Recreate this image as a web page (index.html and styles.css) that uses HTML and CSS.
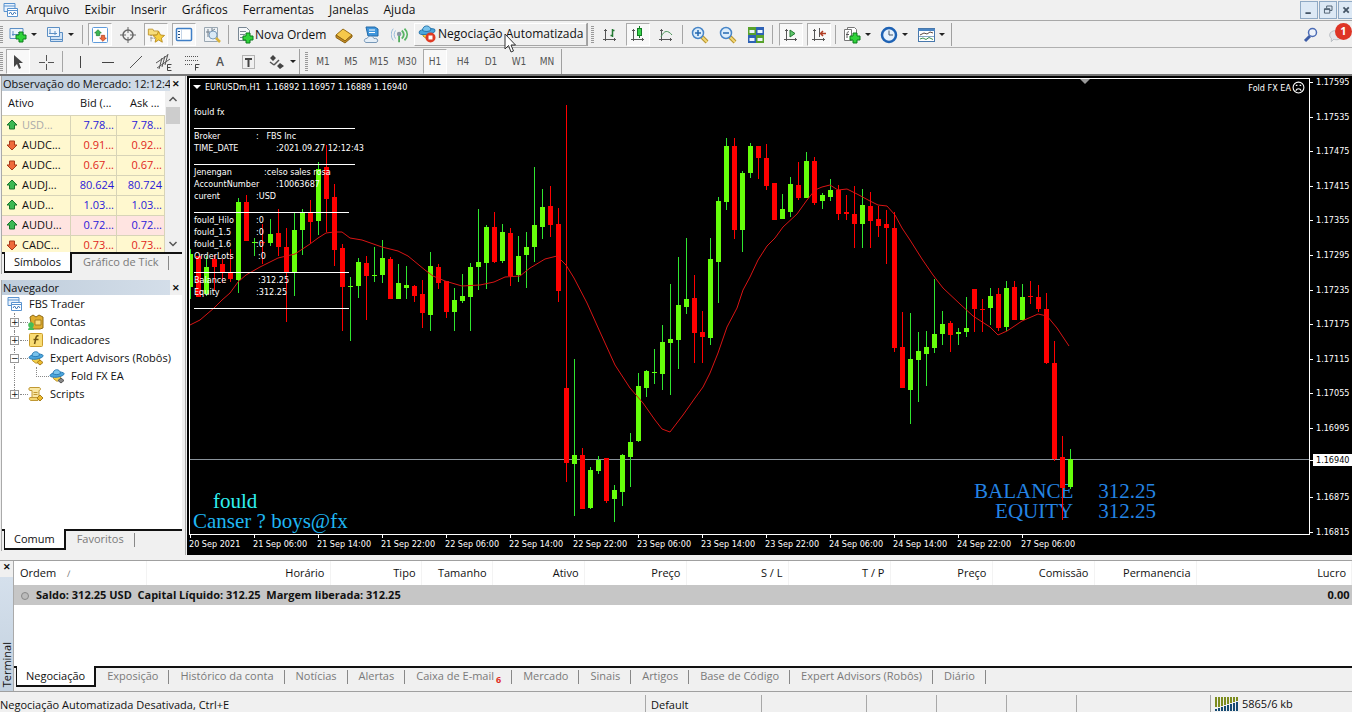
FILE: index.html
```html
<!DOCTYPE html>
<html lang="pt">
<head>
<meta charset="utf-8">
<title>FBS Trader</title>
<link rel="stylesheet" href="styles.css">
</head>
<body>
<svg class="defs" aria-hidden="true">
  <symbol id="plus" viewBox="0 0 12 12"><path d="M4 1h4v3h3v4H8v3H4V8H1V4h3z" fill="#2fd43a" stroke="#0c7d1c"/></symbol>
  <symbol id="app" viewBox="0 0 16 16"><path d="M1 1.500h11v8H1zM1 4h11" fill="#eaf3fd" stroke="#5a93cf"/><path d="M4.500 6.500h10v8h-10zM4.500 8.500h10" fill="#fff" stroke="#5a93cf"/><path d="M6 12l1.500-2 2 3 2-3 1.500 2" fill="none" stroke="#3f78b8"/></symbol>
  <symbol id="robot" viewBox="0 0 18 16"><path d="M5 8l8 0 0 4-4 2-4-3z" fill="#f3d04b" stroke="#b98d1c"/><ellipse cx="9" cy="6.500" rx="8" ry="2.800" fill="#4aa5dd" stroke="#2878b0" transform="rotate(-8 9 6)"/><path d="M4.500 5.500c0-6 8-6 8.500-.5-2 1.800-6 2-8.500.5z" fill="#79c3ec" stroke="#2878b0"/></symbol>
  <symbol id="axes" viewBox="0 0 16 16"><path d="M3.500 2v12M1 12.500h13M2 3.500h3M12.500 11v3" fill="none" stroke="#555"/></symbol>
  <symbol id="lens" viewBox="0 0 18 18"><path d="M11 11l5 5" stroke="#b8932a" stroke-width="4"/><path d="M11 11l5 5" stroke="#f1d777" stroke-width="2"/><circle cx="7" cy="7" r="5.500" fill="#dcedfb" stroke="#4785c7" stroke-width="1.500"/></symbol>
  <symbol id="up" viewBox="0 0 12 12"><path d="M6 1l5 5H8.500v4h-5V6H1z" fill="#3cb854" stroke="#19772c"/></symbol>
  <symbol id="down" viewBox="0 0 12 12"><path d="M6 11l5-5H8.500V2h-5v4H1z" fill="#ee6a3c" stroke="#a83a1b"/></symbol>
  <symbol id="dots" viewBox="0 0 18 18"><path d="M2 3.500h14M2 7.500h14M2 11.500h8" stroke="#555" stroke-dasharray="1 1"/></symbol>
</svg>

<header>
  <nav class="menu">
    <svg class="i16"><use href="#app"/></svg>
    <button>Arquivo</button><button>Exibir</button><button>Inserir</button><button>Gráficos</button><button>Ferramentas</button><button>Janelas</button><button>Ajuda</button>
    <div class="winbtns">
      <button aria-label="Minimizar"><svg viewBox="0 0 18 18"><path d="M5 12.500h6" stroke="#456" stroke-width="2"/></svg></button>
      <button aria-label="Restaurar"><svg viewBox="0 0 18 18"><path d="M7.500 7V4.500h6v5H11M5 7.500h6v5H5zM5 8.500h6" fill="none" stroke="#456"/></svg></button>
      <button aria-label="Fechar"><svg viewBox="0 0 18 18"><path d="M5 6l6 6M11 6l-6 6" stroke="#456" stroke-width="2"/></svg></button>
    </div>
  </nav>

  <div class="bar">
    <span class="grip"></span>
    <button class="drop" aria-label="Novo gráfico"><svg viewBox="0 0 18 18"><path d="M1 2.500h13v10H1z" fill="#e9f2fb" stroke="#5c8fc4"/><path d="M4 5v5M3 8.500h8M9 6l2 2" stroke="#5c8fc4" fill="none"/><use href="#plus" x="6" y="5" width="12" height="12"/></svg></button>
    <button class="drop" aria-label="Perfis"><svg viewBox="0 0 18 18"><path d="M4.500 6.500h12v9h-12z" fill="#cfe2f5" stroke="#5c8fc4"/><path d="M1.500 1.500h12v9h-12z" fill="#eef5fc" stroke="#5c8fc4"/><path d="M4 3v5M3 7.500h8M9 5v4M4 13.500h12" stroke="#5c8fc4"/></svg></button>
    <span class="sep"></span>
    <button class="tool on" aria-label="Observação do Mercado"><svg viewBox="0 0 18 18"><rect x="1.500" y="1.500" width="15" height="15" rx="1" fill="#fff" stroke="#5e9bdc"/><use href="#up" x="3" y="3" width="8" height="8"/><use href="#down" x="8" y="8" width="8" height="8"/></svg></button>
    <button class="tool" aria-label="Janela de Dados"><svg viewBox="0 0 18 18"><circle cx="9" cy="9" r="5" fill="none" stroke="#666" stroke-width="1.500"/><path d="M9 1v6M9 11v6M1 9h6M11 9h6" stroke="#666"/></svg></button>
    <button class="tool on" aria-label="Navegador"><svg viewBox="0 0 20 18"><path d="M1.500 9V2.500h5l1 2h5V9z" fill="#f7dd7b" stroke="#bf952c"/><path d="M4.500 9v8M4 12.500h6" stroke="#555" stroke-dasharray="1 1"/><path d="M13 5l2 4 4.500.5-3.500 3 1 4.500-4-2.500L9 17l1-4.500-3.500-3L11 9z" fill="#f6cf3e" stroke="#b98b1b"/></svg></button>
    <button class="tool on" aria-label="Terminal"><svg viewBox="0 0 18 18"><rect x="1.500" y="2.500" width="15" height="12" rx="1" fill="#fff" stroke="#3f7fc7" stroke-width="1.500"/><path d="M6.500 3v11" stroke="#c5d5e8"/><path d="M3 5.500h2M3 8.500h2M3 11.500h2" stroke="#244a78"/></svg></button>
    <button class="tool" aria-label="Testador de Estratégia"><svg viewBox="0 0 18 18"><path d="M1.500 1.500h13v14h-13z" fill="#eef2f5" stroke="#9aa7b2"/><path d="M5 3v8M9 2v7M3 6h4M9 5l3-2" stroke="#6e7d8a"/><circle cx="10" cy="9" r="4" fill="#dbeaf6" stroke="#7b9cbb"/><path d="M13 12l4 4" stroke="#d9b23a" stroke-width="2.500"/></svg></button>
    <span class="sep"></span>
    <button class="text new"><svg viewBox="0 0 18 18"><path d="M2.500 1.500h8l3 3v10h-11z" fill="#f6f8fa" stroke="#7a8894"/><path d="M4 5.500h6M4 8.500h5M4 11.500h3" stroke="#7a8894"/><use href="#plus" x="6" y="6" width="12" height="12"/></svg>Nova Ordem</button>
    <button class="tool" aria-label="MetaEditor"><svg viewBox="0 0 18 18"><path d="M1 9l7-6 9 6-7 6z" fill="#f5c84a" stroke="#9a6f16"/><path d="M1 9v2.500l9 5.500 7-6V9l-7 6z" fill="#c98f26" stroke="#8c6312"/></svg></button>
    <button class="tool" aria-label="MQL5"><svg viewBox="0 0 18 18"><path d="M3 1h9l3 2v7H5z" fill="#3f96dc" stroke="#2369a6"/><path d="M6 4h6M6 6.500h6" stroke="#fff"/><path d="M3 16.500c-3-1-1.500-4.500 1-4 1-3 6-3 7 0 4-1 5 3.500 2 4z" fill="#e4eef7" stroke="#7898b8"/></svg></button>
    <button class="tool" aria-label="Sinais"><svg viewBox="0 0 20 18"><path d="M5 4c-2 3-2 6 0 9M2.500 2c-3 4-3 9 0 13" fill="none" stroke="#8ab2d6"/><path d="M12 4c3 3 3 6 0 9M15 2c4 4 4 9 0 13" fill="none" stroke="#58b564" stroke-width="2"/><circle cx="9" cy="8" r="2.500" fill="#8898a5"/><path d="M9 10v7" stroke="#52ac5e" stroke-width="2"/></svg></button>
    <button class="text auto"><svg viewBox="0 0 18 18"><use href="#robot" x="0" y="0" width="18" height="16"/><circle cx="12.500" cy="12.500" r="5" fill="#df3a24"/><rect x="10.500" y="10.500" width="4" height="4" fill="#fff"/></svg>Negociação Automatizada</button>
    <span class="end"></span>
    <span class="grip"></span>
    <button class="tool" aria-label="Barras"><svg viewBox="0 0 18 18"><use href="#axes" x="1" y="1" width="16" height="16"/><path d="M11.500 3v8M9.500 9.500h2M11.500 4.500h2" stroke="#237832" stroke-width="1.500"/></svg></button>
    <button class="tool on" aria-label="Velas"><svg viewBox="0 0 18 18"><use href="#axes" x="1" y="1" width="16" height="16"/><path d="M10.500 0v12" stroke="#137a25"/><rect x="8.500" y="2.500" width="4" height="7" fill="#39d14a" stroke="#137a25"/></svg></button>
    <button class="tool" aria-label="Linhas"><svg viewBox="0 0 18 18"><use href="#axes" x="1" y="1" width="16" height="16"/><path d="M4 11c3-7 7-7 11-2" fill="none" stroke="#4a9658"/></svg></button>
    <span class="sep"></span>
    <button class="tool" aria-label="Mais zoom"><svg viewBox="0 0 18 18"><use href="#lens"/><path d="M4 7h6M7 4v6" stroke="#2568b0" stroke-width="1.500"/></svg></button>
    <button class="tool" aria-label="Menos zoom"><svg viewBox="0 0 18 18"><use href="#lens"/><path d="M4 7h6" stroke="#2568b0" stroke-width="1.500"/></svg></button>
    <button class="tool" aria-label="Organizar janelas"><svg viewBox="0 0 18 18"><path d="M1 1h8v8H1z" fill="#58a22c"/><path d="M9 1h8v8H9z" fill="#2e62b5"/><path d="M1 9h8v8H1z" fill="#2e62b5"/><path d="M9 9h8v8H9z" fill="#58a22c"/><path d="M2.500 4h5v3h-5zM10.500 4h5v3h-5zM2.500 12h5v3h-5zM10.500 12h5v3h-5z" fill="#edf5fc"/></svg></button>
    <span class="sep wide"></span>
    <button class="tool on" aria-label="Rolagem automática"><svg viewBox="0 0 18 18"><use href="#axes" x="1" y="1" width="16" height="16"/><path d="M8 4l5 3.500L8 11z" fill="#5fc96c" stroke="#237832"/></svg></button>
    <button class="tool on" aria-label="Deslocar gráfico"><svg viewBox="0 0 18 18"><use href="#axes" x="1" y="1" width="16" height="16"/><path d="M9.500 2v9" stroke="#555"/><path d="M16 7.500h-5M13 5l-2.500 2.500L13 10" fill="none" stroke="#b03b22" stroke-width="1.500"/></svg></button>
    <span class="sep wide"></span>
    <button class="drop" aria-label="Indicadores"><svg viewBox="0 0 18 18"><path d="M4.500 1.500h7l2 2v9h-9z" fill="#fff" stroke="#777"/><path d="M1.500 3.500h7v11h-7z" fill="#fff" stroke="#777"/><path d="M6 6c-2-1-2 1-2 6M3 8.500h3" fill="none" stroke="#555"/><use href="#plus" x="6" y="6" width="12" height="12"/></svg></button>
    <button class="drop" aria-label="Períodos"><svg viewBox="0 0 18 18"><circle cx="9" cy="9" r="7" fill="#e6f1fc" stroke="#1e62b4" stroke-width="2.500"/><path d="M9 4.500V9h4" fill="none" stroke="#456"/></svg></button>
    <button class="drop" aria-label="Modelos"><svg viewBox="0 0 18 18"><rect x="1.500" y="2.500" width="16" height="13" fill="#fff" stroke="#4878ac"/><path d="M1 4h17" stroke="#4c86c4" stroke-width="2"/><path d="M3 9l4-2 3 1 3-2 3 1" fill="none" stroke="#5b4b44"/><path d="M3 13l3-1 3 1.500 3-2 4 2" fill="none" stroke="#3d8f4e"/><path d="M2 10.500h15" stroke="#8aa9c8"/></svg></button>
    <span class="end"></span>
    <div class="right">
      <button aria-label="Buscar"><svg viewBox="0 0 18 18"><path d="M8 10l-5 5" stroke="#3d5ca6" stroke-width="3"/><circle cx="10.500" cy="6.500" r="4" fill="#eef3fb" stroke="#4c6cb5" stroke-width="1.500"/></svg></button>
      <button class="chat" aria-label="Mensagens"><svg viewBox="0 0 24 20"><path d="M2 10c0-7 14-7 14 0s-7 6-9 5l-3 3 0-4c-1-1-2-2-2-4z" fill="#e3e6ea" stroke="#b2b7bd"/></svg><b>1</b></button>
    </div>
  </div>

  <div class="bar second">
    <span class="grip"></span>
    <button class="tool on" aria-label="Cursor"><svg viewBox="0 0 18 18"><path d="M5 2v12l3-3 2 5 2-1-2-5h4z" fill="#444"/></svg></button>
    <button class="tool" aria-label="Mira"><svg viewBox="0 0 18 18"><path d="M9.500 2v6M9.500 11v6M2 9.500h6M11 9.500h6" stroke="#555"/></svg></button>
    <span class="sep"></span>
    <button class="tool" aria-label="Linha vertical"><svg viewBox="0 0 18 18"><path d="M9.500 3v12" stroke="#444"/></svg></button>
    <button class="tool" aria-label="Linha horizontal"><svg viewBox="0 0 18 18"><path d="M3 9.500h12" stroke="#444"/></svg></button>
    <button class="tool" aria-label="Linha de tendência"><svg viewBox="0 0 18 18"><path d="M3 15L15 3" stroke="#555"/></svg></button>
    <button class="tool" aria-label="Canal equidistante"><svg viewBox="0 0 18 18"><path d="M1 10l12-8M2 15L15 6M4 16L7 5M7 14l3-11M10 12l3-11" stroke="#555"/><path d="M16.500 11.500h-4v6h4M12.500 14.500h3" fill="none" stroke="#444"/></svg></button>
    <button class="tool" aria-label="Fibonacci"><svg viewBox="0 0 18 18"><use href="#dots"/><path d="M16.500 11.500h-4v6M12.500 14.500h3" fill="none" stroke="#444"/></svg></button>
    <button class="tool letter" aria-label="Texto">A</button>
    <button class="tool" aria-label="Etiqueta"><svg viewBox="0 0 18 18"><rect x="3.500" y="2.500" width="12" height="13" fill="none" stroke="#777" stroke-dasharray="1 1"/><path d="M6 6h7M9.500 6v8" stroke="#444" stroke-width="2"/></svg></button>
    <button class="drop arrows" aria-label="Setas"><svg viewBox="0 0 18 18"><path d="M2 5l3-3 3 3-3 3zM9 13l3-3 4 3-4 3z" fill="#444"/><path d="M6 12l5-5M2 9l4 3" stroke="#555" stroke-width="1.500"/></svg></button>
    <span class="end"></span>
    <span class="grip"></span>
    <button class="tool tf">M1</button><button class="tool tf">M5</button><button class="tool tf">M15</button><button class="tool tf">M30</button><button class="tool tf on">H1</button><button class="tool tf">H4</button><button class="tool tf">D1</button><button class="tool tf">W1</button><button class="tool tf">MN</button>
    <span class="end"></span>
  </div>
  <svg class="pointer" viewBox="0 0 12 20"><path d="M1 1v15l3.500-3.500L7 19l2.500-1L7 12h4.500z" fill="#fff" stroke="#333"/></svg>
</header>

<main>
  <aside>
    <section class="market">
      <h2><span>Observação do Mercado: 12:12:44</span><button aria-label="Fechar">✕</button></h2>
      <div class="quotes">
        <table>
          <colgroup><col><col class="bid"><col class="ask"></colgroup>
          <thead><tr><th>Ativo</th><th>Bid (...</th><th>Ask ...</th></tr></thead>
          <tbody>
            <tr class="b off"><td><svg><use href="#up"/></svg>USD...</td><td>7.78...</td><td>7.78...</td></tr>
            <tr class="r"><td><svg><use href="#down"/></svg>AUDC...</td><td>0.91...</td><td>0.92...</td></tr>
            <tr class="r"><td><svg><use href="#down"/></svg>AUDC...</td><td>0.67...</td><td>0.67...</td></tr>
            <tr class="b"><td><svg><use href="#up"/></svg>AUDJ...</td><td>80.624</td><td>80.724</td></tr>
            <tr class="b"><td><svg><use href="#up"/></svg>AUD...</td><td>1.03...</td><td>1.03...</td></tr>
            <tr class="b pink"><td><svg><use href="#up"/></svg>AUDU...</td><td>0.72...</td><td>0.72...</td></tr>
            <tr class="r"><td><svg><use href="#down"/></svg>CADC...</td><td>0.73...</td><td>0.73...</td></tr>
          </tbody>
        </table>
        <div class="scroll"><svg viewBox="0 0 16 16"><path d="M4.500 10L8 6.500l3.500 3.500" fill="none" stroke="#555" stroke-width="1.500"/></svg><i></i><svg viewBox="0 0 16 16"><path d="M4.500 6L8 9.500 11.500 6" fill="none" stroke="#555" stroke-width="1.500"/></svg></div>
      </div>
      <div class="tabs"><button class="sel">Símbolos</button><button>Gráfico de Tick</button></div>
    </section>
    <section class="nav">
      <h2><span>Navegador</span><button aria-label="Fechar">✕</button></h2>
      <ul>
        <li><svg class="i16"><use href="#app"/></svg>FBS Trader</li>
        <li class="l1"><i>+</i><svg class="i16" viewBox="0 0 16 16"><path d="M2 3l3-2 3 2 3-2 4 2v11l-3 1H4z" fill="#e0ad2e" stroke="#8f6a17"/><path d="M7 6h6v5H7z" fill="#f8dc7c" stroke="#a77e20"/><circle cx="3" cy="11" r="2.800" fill="#45bd58"/><path d="M0 16c0-4 6-4 6 0z" fill="#45bd58"/></svg>Contas</li>
        <li class="l1"><i>+</i><svg class="i16" viewBox="0 0 16 16"><rect x="1.500" y="1.500" width="13" height="13" rx="1" fill="#f9dc74" stroke="#cb9c2a"/><path d="M10.500 4c-3-1-2.500 3-4 8M5.500 7.500h5" fill="none" stroke="#6e5210" stroke-width="1.500"/></svg>Indicadores</li>
        <li class="l1"><i>−</i><svg class="i16" viewBox="0 0 16 16"><use href="#robot"/><path d="M12 10l3 2.500-3 2.500-3-2.500z" fill="#edba2e" stroke="#a87f1b"/></svg>Expert Advisors (Robôs)</li>
        <li class="l2"><svg class="i16" viewBox="0 0 16 16"><use href="#robot"/><path d="M12 10l3 2.500-3 2.500-3-2.500z" fill="#888" stroke="#555"/></svg>Fold FX EA</li>
        <li class="l1 last"><i>+</i><svg class="i16" viewBox="0 0 16 16"><path d="M2 1.500h9c2 0 2 3 0 3v7H4v-7H2c-1.500 0-1.500-3 0-3z" fill="#f9e7a3" stroke="#c09833"/><path d="M5.500 6.500h4M5.500 8.500h4" stroke="#c09833"/><path d="M2 11.500h8v3H3c-2 0-2-3-1-3z" fill="#f3d56f" stroke="#c09833"/><path d="M12 9l3 3-3 3-3-3z" fill="#edba2e" stroke="#a87f1b"/></svg>Scripts</li>
      </ul>
      <div class="tabs"><button class="sel">Comum</button><button>Favoritos</button></div>
    </section>
  </aside>

  <section class="chart">
    <div class="plot">
      <div class="sig"><p class="aqua">fould</p><p>Canser ? boys@fx</p></div>
      <dl class="funds"><dt>BALANCE</dt><dd>312.25</dd><dt>EQUITY</dt><dd>312.25</dd></dl>
      <div class="priceline"></div>
      <svg class="candles" id="candles"></svg>
      <div class="title"><span class="tri"></span>EURUSDm,H1&nbsp; 1.16892 1.16957 1.16889 1.16940</div>
      <div class="shift"></div>
      <div class="ea">Fold FX EA<svg viewBox="0 0 12 12"><circle cx="6" cy="6" r="5" fill="none" stroke="#fff"/><path d="M3.500 4h1.500M7 4h1.500M3.500 9c1-2.500 4-2.500 5 0" fill="none" stroke="#fff"/></svg></div>
      <div class="note">
        <p class="first">fould fx</p>
        <hr>
        <p><span class="w62">Broker</span>: &nbsp; FBS Inc</p>
        <p><span class="w82">TIME_DATE</span>:2021.09.27 12:12:43</p>
        <hr>
        <p><span class="w70">Jenengan</span>:celso sales rosa</p>
        <p><span class="w82">AccountNumber</span>:10063687</p>
        <p><span class="w62">curent</span>:USD</p>
        <hr class="short">
        <p><span class="w62">fould_Hilo</span>:0</p>
        <p><span class="w62">fould_1.5</span>:0</p>
        <p><span class="w62">fould_1.6</span>:0</p>
        <p><span class="w64">OrderLots</span>:0</p>
        <hr class="short">
        <p><span class="w64">Balance</span>:312.25</p>
        <p><span class="w62">Equity</span>:312.25</p>
        <hr class="short">
      </div>
    </div>
    <ol class="prices">
      <li>1.17595</li><li>1.17535</li><li>1.17475</li><li>1.17415</li><li>1.17355</li><li>1.17295</li><li>1.17235</li><li>1.17175</li><li>1.17115</li><li>1.17055</li><li>1.16995</li><li class="now">1.16940</li><li>1.16875</li><li>1.16815</li>
    </ol>
    <ol class="times">
      <li>20 Sep 2021</li><li>21 Sep 06:00</li><li>21 Sep 14:00</li><li>21 Sep 22:00</li><li>22 Sep 06:00</li><li>22 Sep 14:00</li><li>22 Sep 22:00</li><li>23 Sep 06:00</li><li>23 Sep 14:00</li><li>23 Sep 22:00</li><li>24 Sep 06:00</li><li>24 Sep 14:00</li><li>24 Sep 22:00</li><li>27 Sep 06:00</li>
    </ol>
  </section>
</main>

<section class="terminal">
  <div class="side"><button aria-label="Fechar">✕</button><span>Terminal</span></div>
  <div class="tbody">
    <table>
      <colgroup><col class="c1"><col class="c2"><col class="c3"><col class="c4"><col class="c5"><col class="c6"><col class="c6"><col class="c6"><col class="c6"><col class="c6"><col class="c6"><col></colgroup>
      <thead><tr><th>Ordem <small>∕</small></th><th>Horário</th><th>Tipo</th><th>Tamanho</th><th>Ativo</th><th>Preço</th><th>S / L</th><th>T / P</th><th>Preço</th><th>Comissão</th><th>Permanencia</th><th>Lucro</th></tr></thead>
      <tbody><tr><td colspan="11"><span class="dot"></span>Saldo: 312.25 USD&nbsp; Capital Líquido: 312.25&nbsp; Margem liberada: 312.25</td><td>0.00</td></tr></tbody>
    </table>
    <div class="tabs"><button class="sel">Negociação</button><button>Exposição</button><button>Histórico da conta</button><button>Notícias</button><button>Alertas</button><button>Caixa de E-mail<sub>6</sub></button><button>Mercado</button><button>Sinais</button><button>Artigos</button><button>Base de Código</button><button>Expert Advisors (Robôs)</button><button>Diário</button></div>
  </div>
</section>

<footer>
  <span class="msg">Negociação Automatizada Desativada, Ctrl+E</span>
  <span class="s1">Default</span><span class="s2"></span><span class="s3"></span><span class="s3"></span><span class="s3"></span><span class="s4"></span>
  <span class="net"><svg viewBox="0 0 24 14"><path d="M1 0v10M4 0v10M7 0v9M10 0v8M13 0v7M16 0v6M19 0v5M22 0v4" stroke="#7c8c1e" stroke-width="2"/><path d="M1 12v2M4 11v3M7 10v4M10 9v5M13 8v6M16 7v7M19 6v8M22 5v9" stroke="#164a72" stroke-width="2"/></svg>5865/6 kb</span>
</footer>
<script src="chart.js"></script>
</body>
</html>
```

FILE: styles.css
```css
* { box-sizing: border-box; }
body {
  margin: 0;
  min-height: 100vh;
  display: flex;
  flex-direction: column;
  background: #f0f0f0;
  color: #111;
  font: 11px/16px "Open Sans", "Noto Sans", sans-serif;
}
button { font: inherit; color: inherit; background: none; border: 0; padding: 0; margin: 0; }
h2, p, ul, ol, dl, dd { margin: 0; padding: 0; list-style: none; }
svg { flex: none; display: block; }
.defs { position: absolute; width: 0; height: 0; }
.i16 { width: 16px; height: 16px; }

header { position: relative; border-bottom: 2px solid #777; }
.menu { display: flex; align-items: center; height: 21px; padding-left: 3px; border-bottom: 1px solid #a8a8a8; font-size: 12px; }
.menu > .i16 { margin-right: 7px; }
.menu > button { margin-right: 15px; }
.winbtns { display: flex; gap: 1px; margin-left: auto; }
.winbtns button { width: 18px; height: 18px; border: 1px solid #8fa9c4; background: #dde9f5; }
.winbtns button:last-child { width: 14px; border-right: 0; overflow: hidden; }
.winbtns svg { width: 16px; height: 16px; }

.bar { display: flex; height: 27px; padding: 2px 0 1px; border-bottom: 1px solid #b0b0b0; }
.bar.second { height: 26px; border-bottom: 0; padding: 1px 0 0; }
.grip { width: 3px; margin: 3px 3px 3px 0; background: repeating-linear-gradient(#999 0 1px, #f0f0f0 1px 2px); }
.end + .grip { margin-left: 2px; margin-right: 2px; }
.second .grip { margin-right: 1px; }
.second .end + .grip { margin-left: 4px; }
.end { width: 2px; border-left: 1px solid #a0a0a0; }
.sep { width: 4px; border-left: 1px solid #a5a5a5; margin: 2px 0 2px 2px; }
.sep.wide { width: 5px; }
.tool { width: 28px; display: flex; align-items: center; justify-content: center; }
.tool svg, .drop svg, .text svg { width: 18px; height: 18px; }
.on { width: 24px; margin: 0 2px; background: #f8f8f8; border: 1px solid #fff; border-top-color: #aaa; border-left-color: #aaa; }
.drop { width: 37px; display: flex; align-items: center; gap: 2px; padding-left: 3px; }
.drop::after, .tri { content: ""; border: 3px solid transparent; border-top-color: #222; border-bottom: 0; margin-left: 2px; }
.text { display: flex; align-items: center; font-size: 12px; }
.text.new { width: 96px; padding-left: 2px; margin-left: 2px; gap: 1px; white-space: nowrap; }
.text.auto { width: 173px; padding: 0 0 2px 3px; gap: 2px; border: 1px solid #a5a5a5; border-top-color: #fff; border-left-color: #fff; white-space: nowrap; }
.letter { font-weight: 600; font-size: 12px; color: #555; }
.tf { font-size: 10px; color: #555; font-family: "DejaVu Sans Condensed", "DejaVu Sans", sans-serif; }
.arrows { padding-left: 6px; }
.right { display: flex; align-items: center; gap: 8px; margin-left: auto; }
.right svg { width: 18px; height: 18px; }
.chat { position: relative; width: 24px; }
.chat svg { width: 20px; }
.chat b { position: absolute; right: 0; top: -3px; width: 17px; height: 17px; border-radius: 50%; background: #de3526; color: #fff; font-size: 11px; }
.pointer { position: absolute; left: 504px; top: 33px; width: 12px; height: 20px; }

main { display: flex; flex: 1; min-height: 479px; }
aside { width: 186px; flex: none; display: flex; flex-direction: column; gap: 6px; padding: 0 3px 4px 1px; border-right: 1px solid #aaa; }
h2 { display: flex; align-items: center; height: 15px; padding-left: 1px; background: linear-gradient(90deg, #bfcddb, #d5dfea); font-size: 11px; font-weight: 400; }
h2 span { flex: 1; width: 1px; white-space: nowrap; overflow: hidden; }
h2 button { width: 12px; background: #f0f0f0; font-size: 9px; font-weight: 700; }
.market, .nav { border-left: 1px solid #aaa; }
.nav { display: flex; flex-direction: column; flex: 1; }
.quotes { display: flex; height: 161px; overflow: hidden; background: #fff; }
table { border-collapse: collapse; table-layout: fixed; }
.quotes table { flex: 1; width: 1px; height: 164px; }
.quotes tr { height: 20px; background: #fff8cf; }
.quotes thead tr { height: 24px; background: #fff; }
.quotes th { font-weight: 400; text-align: right; padding: 0 5px 0 0; }
.quotes th:first-child { text-align: left; padding-left: 6px; }
.quotes td { border: 1px solid #d8d4b8; border-left: 0; padding: 0 2px 0 0; text-align: right; }
.quotes td:first-child { padding-left: 4px; text-align: left; color: #111; }
.quotes td svg { display: inline-block; width: 12px; height: 12px; margin-right: 4px; vertical-align: -2px; }
.bid { width: 46px; }
.ask { width: 48px; }
.b { color: #2a18d8; }
.r { color: #e0261c; }
.off td:first-child { color: #aaa; }
.quotes .pink { background: #ffe4e1; }
.scroll { width: 17px; display: flex; flex-direction: column; background: #f0f0f0; }
.scroll svg { width: 16px; height: 16px; }
.scroll i { width: 14px; height: 17px; margin: 0 1px auto; background: #cdcdcd; }

.tabs { display: flex; align-items: flex-start; height: 22px; padding-left: 2px; border-top: 2px solid #111; color: #7a7a7a; white-space: nowrap; }
.tabs button { position: relative; padding: 0 11px; height: 16px; }
.tabs button:not(.sel)::after { content: ""; position: absolute; right: 0; top: 2px; height: 14px; border-right: 1px solid #888; }
.tabs .sel { margin-top: -2px; height: 21px; padding: 0 9px; color: #111; background: #fff; border: solid #111; border-width: 0 2px 2px 1px; }

.nav ul { flex: 1; background: #fff; }
.nav li { position: relative; display: flex; align-items: center; gap: 6px; height: 18px; padding-left: 5px; white-space: nowrap; }
.nav .l1 { padding-left: 8px; }
.nav .l1 .i16 { margin-left: 3px; }
.nav .l2 { padding-left: 47px; }
.nav li i { width: 9px; height: 9px; border: 1px solid #999; background: #fff; font: 9px/7px "DejaVu Sans", sans-serif; text-align: center; z-index: 1; }
.nav li:not(:first-child)::before { content: ""; position: absolute; left: 12px; top: 0; height: 18px; border-left: 1px dotted #888; }
.nav li.last::before { height: 9px; }
.nav .l1::after { content: ""; position: absolute; left: 18px; width: 8px; border-top: 1px dotted #888; }
.nav .l2::after { content: ""; position: absolute; left: 34px; top: 0; width: 12px; height: 9px; border: dotted #888; border-width: 0 0 1px 1px; }

.chart {
  flex: 1;
  display: grid;
  grid-template: 1fr 20px / 1fr 42px;
  background: #000;
  color: #fff;
  padding: 2px 0 0 2px;
  margin-left: 1px;
  font: 9px/12px "DejaVu Sans Condensed", "DejaVu Sans", sans-serif;
}
.plot { position: relative; overflow: hidden; border: 1px solid #fff; }
.candles { position: absolute; left: 0; top: 0; width: 100%; height: 100%; }
.candles .g { fill: #66ff0a; stroke: #2fe62f; }
.candles .d { fill: #f00; stroke: #f00; }
.candles line { stroke-width: 1; }
.candles rect { stroke: none; }
.candles .avg { fill: none; stroke: #d81414; }
.priceline { position: absolute; left: 0; right: 0; top: 380px; border-top: 1px solid #8a939b; }
.title { position: absolute; left: 3px; top: 2px; display: flex; align-items: center; }
.title .tri { border-width: 4px 4px 0; border-top-color: #fff; margin: 0 4px 0 0; }
.shift { position: absolute; left: 890px; top: 0; border: 5px solid transparent; border-top-color: #999; border-bottom: 0; }
.ea { position: absolute; right: 4px; top: 2px; display: flex; align-items: center; gap: 1px; }
.ea svg { width: 13px; height: 13px; }
.note { position: absolute; left: 4px; top: 27px; white-space: nowrap; }
.note span { display: inline-block; }
.note p { height: 12px; }
.note hr { width: 161px; height: 12px; margin: 0; border: 0; background: linear-gradient(#fff, #fff) 0 10px / 100% 1px no-repeat; }
.note .short { width: 155px; }
.w62 { width: 62px; }
.w64 { width: 64px; }
.w70 { width: 70px; }
.w82 { width: 82px; }
.sig, .funds { position: absolute; font: 21px/20px "Liberation Serif", serif; color: #1fb6f2; }
.sig { left: 3px; bottom: 3px; }
.sig .aqua { padding-left: 20px; color: #2ff0f0; }
.funds { right: 153px; bottom: 13px; display: grid; grid-template-columns: auto auto; column-gap: 25px; color: #2484e4; }
.funds dt { text-align: right; }
.prices { display: flex; flex-direction: column; justify-content: space-between; margin: -2px 0 -3px; }
.prices li { padding-left: 3px; height: 12px; position: relative; margin-left: 3px; }
.prices li::before { content: ""; position: absolute; left: -3px; top: 6px; width: 3px; border-top: 1px solid #fff; }
.prices .now { background: #fff; color: #000; top: -3px; }
.times { display: flex; grid-column: 1 / 3; overflow: hidden; }
.times li { position: relative; width: 64px; flex: none; padding-top: 3px; white-space: nowrap; }
.times li::before { content: ""; position: absolute; left: 1px; top: 0; height: 3px; border-left: 1px solid #fff; }

.terminal { display: flex; height: 131px; margin-top: 5px; border-top: 1px solid #a0a0a0; }
.side { width: 14px; display: flex; flex-direction: column; align-items: center; border-right: 1px solid #aaa; background: linear-gradient(#f0f0f0 16px, #d5e0ec 16px, #c3d1df); }
.side button { font-size: 9px; line-height: 12px; font-weight: 700; }
.side span { margin-top: auto; writing-mode: vertical-rl; transform: rotate(180deg); line-height: 12px; padding-top: 4px; }
.tbody { flex: 1; display: flex; flex-direction: column; background: #fff; }
.tbody table { width: 100%; }
.tbody th { height: 24px; font-weight: 400; text-align: right; padding: 0 5px 0 0; border-right: 1px solid #f3f3f3; }
.tbody th:first-child { text-align: left; padding-left: 6px; }
.tbody th small { padding-left: 8px; color: #777; }
.tbody td { height: 20px; padding: 0 2px 0 6px; font-weight: 700; background: #c6c6c6; }
.tbody td:last-child { text-align: right; }
.dot { display: inline-block; width: 8px; height: 8px; margin: 0 7px -1px 1px; border: 1px solid #888; border-radius: 50%; background: #bbb; }
.c1 { width: 132px; }
.c2 { width: 184px; }
.c3 { width: 91px; }
.c4 { width: 71px; }
.c5 { width: 92px; }
.c6 { width: 102px; }
.tbody .tabs { margin-top: auto; height: 25px; background: #f0f0f0; }
.tabs sub { color: #e02a1c; font-size: 9px; line-height: 8px; font-weight: 700; padding-left: 2px; }

footer { display: flex; height: 21px; border-top: 1px solid #a0a0a0; white-space: nowrap; }
footer span { border-left: 1px solid #a8a8a8; margin: 3px 0 0; line-height: 20px; height: 18px; padding-left: 5px; }
footer .msg { flex: 1; border: 0; padding: 0; }
.s1 { width: 116px; }
.s2 { width: 105px; }
.s3 { width: 70px; }
.s4 { width: 134px; }
footer .net { width: 142px; display: flex; align-items: center; gap: 3px; padding-left: 4px; }
.net svg { width: 24px; height: 14px; }
```

FILE: chart.js
```js
// Bars every 8px: direction (g up, d down), high, body top, body bottom, low.
const bars = `g249,254,287,299 d256,256,297,297 g256,267,294,296 d255,259,267,290 d259,264,272,283 d249,273,279,282
g198,202,280,293 d195,202,241,241 g238,242,243,256 d224,242,243,264 g219,234,243,246 d209,233,247,256
d228,247,272,322 g213,230,272,296 g209,213,230,255 d200,213,222,243 g162,169,221,235 d145,167,199,232
d184,197,250,266 d244,248,287,331 g277,286,287,341 g258,262,286,298 d256,263,276,320 g247,275,276,282
g240,258,275,283 d257,259,299,299 g264,283,299,299 g266,285,288,299 d285,286,296,302 d280,294,313,328
g252,266,315,331 d264,267,283,289 d281,281,312,318 g288,300,312,331 g274,296,301,303 g263,267,297,331
g209,262,267,290 g225,227,263,289 d212,227,262,263 g224,232,261,263 d228,233,276,286 g236,256,275,282
g232,247,255,288 g167,225,247,262 g189,207,227,239 d186,206,225,237 d208,224,291,302 d105,388,463,482
g359,455,464,516 d448,455,509,509 g467,470,508,509 g456,460,471,474 d458,458,501,503 g485,490,499,522
g454,455,492,506 g433,442,457,487 g373,386,441,442 g370,371,388,397 g349,372,373,384 g325,342,374,390
g284,339,343,395 g257,305,340,369 g238,299,307,314 d275,298,333,363 d311,332,337,363 g238,259,338,345
g197,201,262,303 g138,146,202,210 d138,146,230,239 g171,173,230,252 g143,146,173,178 d146,146,158,179
d144,158,186,190 d183,183,220,220 g194,209,219,219 g177,184,212,217 d162,185,198,200 g152,161,198,198
d157,161,203,205 g193,195,201,209 g179,190,197,201 d185,190,214,220 d195,212,214,220 d186,214,224,248
g189,205,224,248 d192,206,221,248 d206,219,226,237 d210,224,228,264 d212,228,348,352 d312,347,388,388
g313,359,390,424 g332,351,360,402 g331,347,354,386 g279,334,348,353 g311,324,334,345 d321,323,335,352
g328,332,334,345 g297,328,332,337 d289,289,309,332 d299,309,310,332 g288,296,308,325 d288,294,328,331
g281,288,327,331 d281,287,320,320 g284,297,320,320 d281,296,297,304 d285,297,309,312 d293,309,363,364
d341,363,459,461 d436,457,488,520 g449,459,487,489`.split(/\s+/);

const average = `190,325 200,320 214,308 222,300 230,293 238,282 246,275 260,267 278,258 295,254 310,244 318,238 326,233 334,232 342,232 350,238
362,240 382,247 398,251 408,256 425,270 433,276 445,281 462,286 480,285 494,282 505,277 520,276 530,268 545,259 557,256 566,265 574,278
587,303 600,332 615,365 630,388 643,403 655,420 662,429 670,432 683,415 695,398 703,387 710,373 718,353 727,327 737,308 743,290
750,277 758,260 767,246 775,238 783,227 797,214 807,200 815,190 822,187 830,185 838,190 847,189 857,194 870,201 878,205 887,206
895,215 902,228 910,240 922,259 933,275 943,288 960,304 973,316 990,327 998,335 1007,331 1022,321 1038,314 1047,316 1057,328 1069,346`;

const X = 190, Y = 79;
const parts = bars.map((bar, i) => {
  const kind = bar[0];
  const [high, top, bottom, low] = bar.slice(1).split(",").map(v => v - Y);
  const x = 8 * i;
  return `<g class="${kind}"><line x1="${x + 0.5}" x2="${x + 0.5}" y1="${high}" y2="${low}"/>` +
    `<rect x="${x - 2}" y="${top}" width="5" height="${bottom - top}"/></g>`;
});
const points = average.split(/\s+/).map(p => {
  const [x, y] = p.split(",");
  return `${x - X},${y - Y}`;
}).join(" ");
document.getElementById("candles").innerHTML = parts.join("") + `<polyline class="avg" points="${points}"/>`;
```
